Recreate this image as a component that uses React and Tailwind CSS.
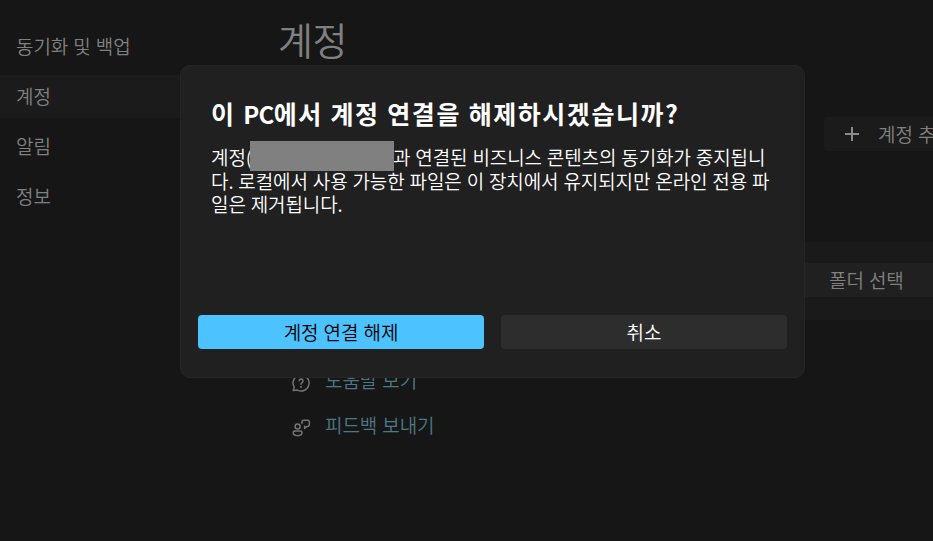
import React from 'react';
import clsx from 'clsx';

const navItems = [
  { id: 'sync', label: '동기화 및 백업' },
  { id: 'account', label: '계정' },
  { id: 'alerts', label: '알림' },
  { id: 'about', label: '정보' },
];

const HelpIcon = () => (
  <svg width="20" height="20" viewBox="0 0 20 20" fill="none" stroke="#747474" strokeWidth="1.5" strokeLinecap="round" strokeLinejoin="round">
    <path d="M10 2a8 8 0 1 1-3.6 15.1L2.2 17.6l1-3.5A8 8 0 0 1 10 2z" />
    <path d="M8.2 7.8a1.9 1.9 0 1 1 3.1 1.6c-.8.6-1.3 1-1.3 1.8" />
    <path d="M10 13.8v.1" strokeWidth="1.9" />
  </svg>
);

const FeedbackIcon = () => (
  <svg width="20" height="20" viewBox="0 0 20 20" fill="none" stroke="#747474" strokeWidth="1.5" strokeLinecap="round" strokeLinejoin="round">
    <circle cx="6.6" cy="8.4" r="2.5" />
    <path d="M3.9 12.9h5.4a1.7 1.7 0 0 1 1.7 1.7c0 2.1-1.9 3.1-4.4 3.1s-4.4-1-4.4-3.1a1.7 1.7 0 0 1 1.7-1.7z" />
    <path d="M11 5.4V4a1.8 1.8 0 0 1 1.8-1.8h3.8A1.8 1.8 0 0 1 18.4 4v2.6a1.8 1.8 0 0 1-1.8 1.8h-.6l-2.4 2V8.2" />
  </svg>
);

const PlusIcon = () => (
  <svg width="16" height="16" viewBox="0 0 16 16" stroke="#8a8a8a" strokeWidth="2">
    <path d="M1 8h14M8 1v14" />
  </svg>
);

const Sidebar = () => (
  <nav className="flex w-[180px] shrink-0 flex-col gap-[7px] pt-[25px]">
    {navItems.map((item) => (
      <div key={item.id} className={clsx('flex h-[43px] items-center pl-4', item.id === 'account' && 'bg-[#1b1b1b]')}>
        {item.label}
      </div>
    ))}
  </nav>
);

const AccountPage = () => (
  <main className="flex min-w-0 flex-1 flex-col pl-[98px]">
    <h1 className="mt-[11px] h-[56px] text-[38px] leading-[56px] tracking-[-0.4px]">계정</h1>

    <div className="mt-[50px] flex justify-end">
      <div className="flex h-[34px] w-[109px] shrink-0 items-center gap-[18px] overflow-hidden rounded-l bg-[#1b1b1b] pl-5">
        <span className="shrink-0"><PlusIcon /></span>
        <span className="shrink-0">계정 추가</span>
      </div>
    </div>

    <div className="mt-[91px] flex h-[78px] items-start justify-end bg-[#1a1a1a] pt-[21px]">
      <div className="flex h-[34px] w-[133px] items-center bg-[#202020] pl-[29px]">폴더 선택</div>
    </div>

    <div className="mt-[46px] flex flex-col gap-[17px] pl-[13px] text-[#4c7984]">
      <div className="flex h-7 items-center gap-[14px]">
        <span className="mt-1.5"><HelpIcon /></span>
        <span>도움말 보기</span>
      </div>
      <div className="flex h-7 items-center gap-[14px]">
        <span className="mt-1.5"><FeedbackIcon /></span>
        <span>피드백 보내기</span>
      </div>
    </div>
  </main>
);

const UnlinkDialog = () => (
  <div role="dialog" className="absolute top-[65px] left-[180px] flex h-[313px] w-[625px] flex-col rounded-[10px] border border-[#252525] bg-[#202020] px-[17px] pb-7 text-white">
    <h2 className="mt-[29px] ml-[13px] h-9 whitespace-nowrap text-[25px] leading-9 font-bold tracking-[1.55px] [word-spacing:0.5px]">
      이 <span className="text-[24px] tracking-[-0.7px]">PC</span>에서 계정 연결을 해제하시겠습니까?
    </h2>
    <div className="mt-[14px] ml-[13px] whitespace-nowrap leading-[23.5px] [word-spacing:0.8px]">
      <p className="flex h-[23.5px] items-center">
        <span className="w-[39px] shrink-0">계정(</span>
        <span className="-mt-1 -mb-1 h-[30px] w-[144px] shrink-0 translate-y-[-1px] bg-[#808080]" />
        <span className="-ml-px">과 연결된 비즈니스 콘텐츠의 동기화가 중지됩니</span>
      </p>
      <p>다. 로컬에서 사용 가능한 파일은 이 장치에서 유지되지만 온라인 전용 파</p>
      <p>일은 제거됩니다.</p>
    </div>
    <div className="mt-auto flex gap-[17px]">
      <button className="h-[34px] flex-1 rounded bg-[#4cc2ff] text-black [word-spacing:1px]">계정 연결 해제</button>
      <button className="h-[34px] flex-1 rounded bg-[#2d2d2d] text-white">취소</button>
    </div>
  </div>
);

const App = () => {
  return (
    <div className="relative flex h-[541px] w-[933px] overflow-hidden bg-[#161616] font-['Noto_Sans_CJK_KR',sans-serif] text-[19px] font-[350] tracking-[-0.1px] whitespace-nowrap text-[#808080] [word-spacing:1px]">
      <Sidebar />
      <AccountPage />
      <UnlinkDialog />
    </div>
  );
};

export default App;
